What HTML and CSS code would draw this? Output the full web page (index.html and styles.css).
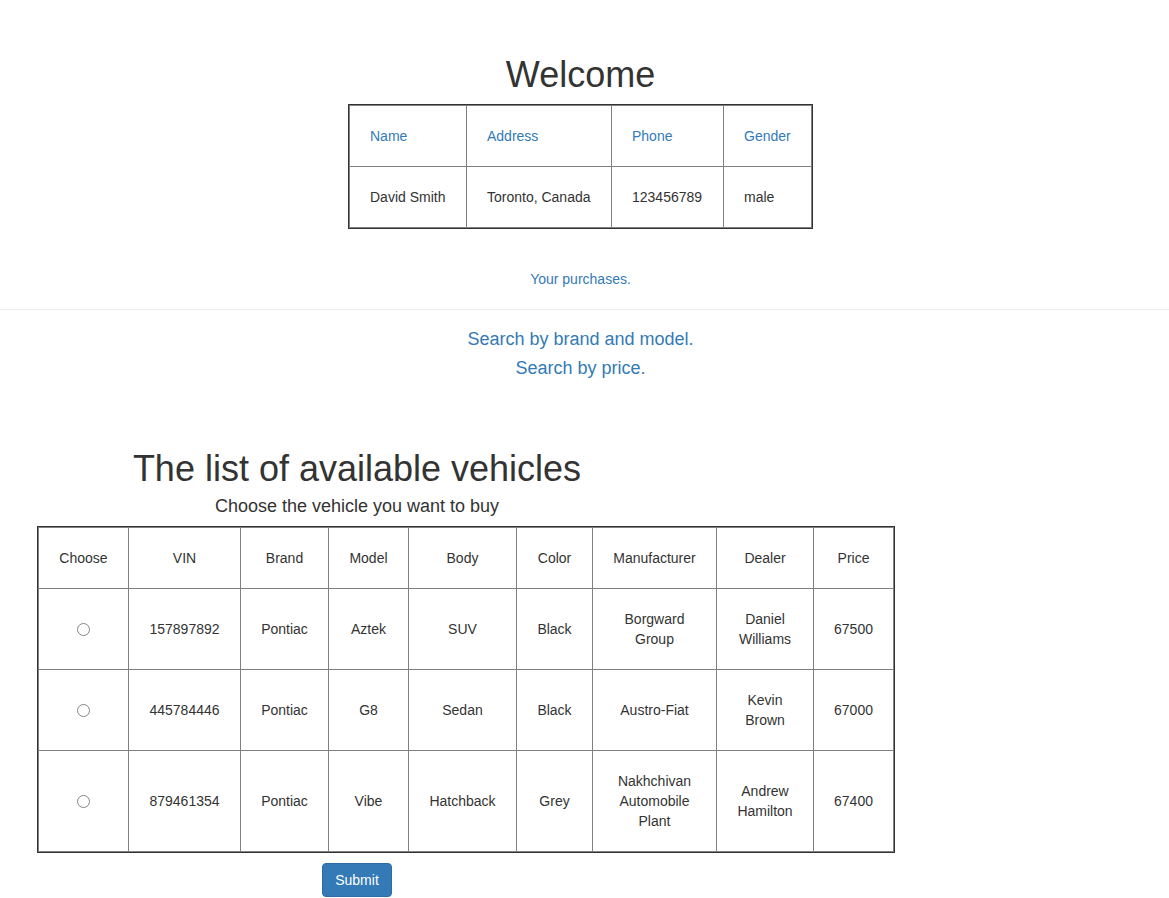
FILE: index.html
```html
<!DOCTYPE html>
<html lang="en">
<head>
<meta charset="utf-8">
<title>Welcome</title>
<link rel="stylesheet" href="styles.css">
</head>
<body>
<div class="top">
  <h1 class="title">Welcome</h1>
  <table class="info">
    <colgroup><col class="c1"><col class="c2"><col class="c3"><col class="c4"></colgroup>
    <thead>
      <tr><th>Name</th><th>Address</th><th>Phone</th><th>Gender</th></tr>
    </thead>
    <tbody>
      <tr><td>David Smith</td><td>Toronto, Canada</td><td>123456789</td><td>male</td></tr>
    </tbody>
  </table>
  <p class="purchases"><a href="#">Your purchases.</a></p>
</div>
<hr class="rule">
<div class="searches">
  <h4 class="search"><a href="#">Search by brand and model.</a></h4>
  <h4 class="search"><a href="#">Search by price.</a></h4>
</div>
<form class="vehicles">
  <h1 class="title list-title">The list of available vehicles</h1>
  <h4 class="subtitle">Choose the vehicle you want to buy</h4>
  <table class="cars">
    <colgroup>
      <col class="k1"><col class="k2"><col class="k3"><col class="k4"><col class="k5"><col class="k6"><col class="k7"><col class="k8"><col class="k9">
    </colgroup>
    <thead>
      <tr><th>Choose</th><th>VIN</th><th>Brand</th><th>Model</th><th>Body</th><th>Color</th><th>Manufacturer</th><th>Dealer</th><th>Price</th></tr>
    </thead>
    <tbody>
      <tr><td><input type="radio" name="car"></td><td>157897892</td><td>Pontiac</td><td>Aztek</td><td>SUV</td><td>Black</td><td>Borgward Group</td><td>Daniel Williams</td><td>67500</td></tr>
      <tr><td><input type="radio" name="car"></td><td>445784446</td><td>Pontiac</td><td>G8</td><td>Sedan</td><td>Black</td><td>Austro-Fiat</td><td>Kevin Brown</td><td>67000</td></tr>
      <tr><td><input type="radio" name="car"></td><td>879461354</td><td>Pontiac</td><td>Vibe</td><td>Hatchback</td><td>Grey</td><td>Nakhchivan Automobile Plant</td><td>Andrew Hamilton</td><td>67400</td></tr>
    </tbody>
  </table>
  <button type="button" class="btn">Submit</button>
</form>
</body>
</html>
```

FILE: styles.css
```css
html, body {
  margin: 0;
  padding: 0;
}
body {
  font-family: "Liberation Sans", Arial, Helvetica, sans-serif;
  font-size: 14px;
  line-height: 20px;
  color: #333;
  background: #fff;
}
a {
  color: #337ab7;
  text-decoration: none;
}
.top {
  width: 1161px;
  text-align: center;
  padding-top: 55px;
}
.title {
  font-size: 36px;
  font-weight: 500;
  line-height: 1.1;
  margin: 0 0 10px;
}
table {
  border-collapse: collapse;
  border-spacing: 0;
  table-layout: fixed;
  box-shadow: 0 0 0 1px #333;
}
th, td {
  border: 1px solid #808080;
  padding: 20px;
  font-weight: normal;
  vertical-align: middle;
}
.info {
  margin: 0 auto;
  width: 462px;
  text-align: left;
}
.info th {
  color: #337ab7;
}
.info .c1 { width: 117px; }
.info .c2 { width: 145px; }
.info .c3 { width: 112px; }
.info .c4 { width: 88px; }
.purchases {
  margin: 41px 0 0;
}
.rule {
  margin: 20px 0;
  border: 0;
  border-top: 1px solid #eee;
  height: 0;
}
.searches {
  width: 1161px;
  text-align: center;
}
.search {
  font-size: 18px;
  font-weight: 500;
  line-height: 1.1;
  margin: 0 0 10px;
}
.vehicles {
  margin: 70px 0 0 38px;
  width: 638px;
  text-align: center;
}
.list-title {
  margin-bottom: 0;
}
.subtitle {
  font-size: 18px;
  font-weight: 500;
  line-height: 1.1;
  margin: 8px 0 10px;
}
.cars {
  width: 855px;
  text-align: center;
}
.cars .k1 { width: 90px; }
.cars .k2 { width: 112px; }
.cars .k3 { width: 88px; }
.cars .k4 { width: 80px; }
.cars .k5 { width: 108px; }
.cars .k6 { width: 76px; }
.cars .k7 { width: 124px; }
.cars .k8 { width: 97px; }
.cars .k9 { width: 80px; }
.cars input[type="radio"] {
  -webkit-appearance: none;
  appearance: none;
  box-sizing: border-box;
  margin: 0;
  width: 13px;
  height: 13px;
  border: 1px solid #858585;
  border-radius: 50%;
  background: #fff;
  vertical-align: middle;
}
.btn {
  margin-top: 11px;
  display: inline-block;
  font-family: inherit;
  font-size: 14px;
  line-height: 20px;
  padding: 6px 12px;
  color: #fff;
  background: #337ab7;
  border: 1px solid #2e6da4;
  border-radius: 4px;
  cursor: pointer;
}
```
